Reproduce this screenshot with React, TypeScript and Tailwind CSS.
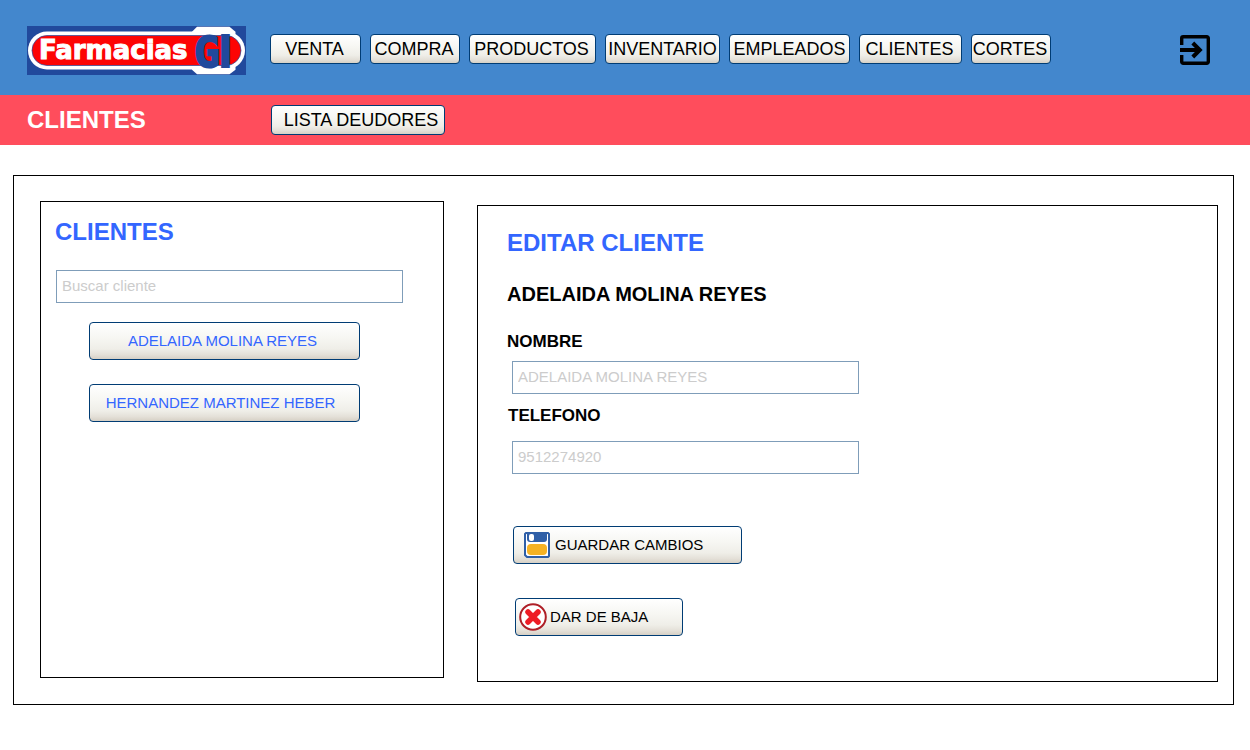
import type { InputHTMLAttributes, ReactNode } from "react";

const face =
  "rounded-[4px] border border-[#003c74] bg-[linear-gradient(180deg,#ffffff_0%,#f7f7f3_40%,#efeee8_72%,#e4e0d8_88%,#d6d0c5_100%)] whitespace-nowrap";

const navItems = [
  { label: "VENTA", size: "w-[91px] pr-[2px]" },
  { label: "COMPRA", size: "w-[90px] pr-[2px]" },
  { label: "PRODUCTOS", size: "w-[127px] pr-[2px]" },
  { label: "INVENTARIO", size: "w-[115px]" },
  { label: "EMPLEADOS", size: "w-[121px]" },
  { label: "CLIENTES", size: "w-[103px] pr-[2px]" },
  { label: "CORTES", size: "w-[80px] pr-[2px]" },
];

const clients = [
  { name: "ADELAIDA MOLINA REYES", inset: "pr-1" },
  { name: "HERNANDEZ MARTINEZ HEBER", inset: "pr-2" },
];

function Logo() {
  return (
    <svg width="219" height="49" viewBox="0 0 219 49" role="img" aria-label="Farmacias GI" className="shrink-0 overflow-visible">
      <rect width="219" height="49" fill="#21499c" />
      <rect x="1" y="5.5" width="217" height="38" rx="19" fill="#fff" />
      <path d="M170 .8h32.5l6 5v38l-6 4.500H170l-5-4.500v-38z" fill="#fff" />
      <rect x="5" y="9.500" width="209" height="30" rx="15" fill="#fd0404" stroke="#21499c" strokeWidth="0.7" />
      <text x="12" y="33" fontFamily="DejaVu Sans" fontWeight="700" fontSize="26" fill="#fff" stroke="#fff" strokeWidth="1">
        Farmacias
      </text>
      <text y="41" fontWeight="700" fill="#21499c" stroke="#21499c" strokeWidth="2">
        <tspan x="167" fontFamily="DejaVu Sans Mono" fontSize="43">G</tspan>
        <tspan x="192" fontFamily="Liberation Sans" fontSize="46">I</tspan>
      </text>
    </svg>
  );
}

function ExitIcon() {
  return (
    <svg width="30" height="30" viewBox="0 0 30 30" fill="none" stroke="#000" strokeWidth="3.4" aria-hidden="true">
      <path d="M1.7 10V3.2a1.5 1.5 0 0 1 1.5-1.5h23.6a1.5 1.5 0 0 1 1.5 1.5v23.6a1.5 1.5 0 0 1-1.5 1.5H3.2a1.5 1.5 0 0 1-1.5-1.5V20" />
      <path d="M0 15h20M12.8 8l7 7-7 7" strokeWidth="4" />
    </svg>
  );
}

function SaveIcon() {
  return (
    <svg width="26" height="26" viewBox="0 0 26 26" aria-hidden="true">
      <path d="M2 1h22l1 1v22l-1 1H3l-2-2V2z" fill="#fff" stroke="#2f5fa7" strokeWidth="2" />
      <path d="M3 0h20v7q0 3-3 3H6q-3 0-3-3z" fill="#2f5fa7" />
      <rect x="5" y="2" width="5" height="7" rx="2" fill="#fff" />
      <rect x="3" y="12" width="20" height="11" rx="4" fill="#f5b224" />
    </svg>
  );
}

function RemoveIcon() {
  return (
    <svg width="28" height="28" viewBox="0 0 28 28" fill="none" aria-hidden="true">
      <circle cx="14" cy="14" r="12.8" fill="#fff" stroke="#ae1f27" strokeWidth="2" />
      <path d="m9 9 10 10m0-10L9 19" stroke="#ee1c25" strokeWidth="5.5" strokeLinecap="round" />
    </svg>
  );
}

function TextBox(props: InputHTMLAttributes<HTMLInputElement>) {
  return (
    <input
      {...props}
      className="block h-[33px] w-full max-w-[347px] border border-[#7f9db9] bg-white px-[5px] pb-[3px] text-[15px] text-black placeholder:text-[#cccccc]"
    />
  );
}

function ActionButton({ icon, size, children }: { icon: ReactNode; size: string; children: ReactNode }) {
  return (
    <button type="button" className={`${face} ${size} flex h-[38px] items-center text-[15px]`}>
      {icon}
      {children}
    </button>
  );
}

export default function App() {
  return (
    <div className="font-['Liberation_Sans',Arial,sans-serif] text-black">
      <header>
        <div className="flex h-[95px] items-center bg-[#4387cd] pt-[6px] pr-10 pl-[27px]">
          <Logo />
          <nav className="ml-6 flex gap-[9px] pb-[3px]">
            {navItems.map((item) => (
              <button key={item.label} type="button" className={`${face} ${item.size} flex h-[30px] items-center justify-center text-lg`}>
                {item.label}
              </button>
            ))}
          </nav>
          <button type="button" aria-label="Salir" className="ml-auto pb-px">
            <ExitIcon />
          </button>
        </div>
        <div className="flex items-center bg-[#ff4d5c] pt-[10px] pb-[10px] pl-[27px]">
          <h1 className="w-[244px] text-2xl leading-[30px] font-bold text-white">CLIENTES</h1>
          <button type="button" className={`${face} h-[30px] w-[174px] pl-[6px] text-lg`}>
            LISTA DEUDORES
          </button>
        </div>
      </header>

      <main className="mt-[30px] mr-4 ml-[13px] grid grid-cols-[404px_1fr] gap-x-[33px] border border-black pt-[25px] pr-[15px] pb-[22px] pl-[26px]">
        <section className="mb-1 min-h-[477px] border border-black pt-[14px] pr-10 pl-[15px]">
          <h2 className="mb-[22px] -ml-px text-2xl font-bold text-[#3366ff]">CLIENTES</h2>
          <TextBox type="search" aria-label="Buscar cliente" placeholder="Buscar cliente" />
          <ul className="mt-[19px] ml-[33px] flex flex-col gap-6">
            {clients.map((client) => (
              <li key={client.name}>
                <button type="button" className={`${face} ${client.inset} block h-[38px] w-[271px] text-[15px] text-[#3366ff]`}>
                  {client.name}
                </button>
              </li>
            ))}
          </ul>
        </section>

        <section className="mt-1 min-h-[477px] border border-black pt-[21px] pl-[29px]">
          <h2 className="text-2xl font-bold text-[#3366ff]">EDITAR CLIENTE</h2>
          <h3 className="mt-[21px] text-xl leading-7 font-bold">ADELAIDA MOLINA REYES</h3>
          <form className="mt-6">
            <label htmlFor="nombre" className="block text-[17px] leading-5 font-bold">
              NOMBRE
            </label>
            <div className="mt-[9px] ml-[5px]">
              <TextBox id="nombre" type="text" placeholder="ADELAIDA MOLINA REYES" />
            </div>
            <label htmlFor="telefono" className="mt-3 block pl-px text-[17px] leading-5 font-bold">
              TELEFONO
            </label>
            <div className="mt-[15px] ml-[5px]">
              <TextBox id="telefono" type="tel" placeholder="9512274920" />
            </div>
            <div className="mt-[52px] ml-[6px] flex flex-col gap-[34px]">
              <ActionButton icon={<SaveIcon />} size="w-[229px] gap-[5px] pl-[10px]">
                GUARDAR CAMBIOS
              </ActionButton>
              <ActionButton icon={<RemoveIcon />} size="ml-[2px] w-[168px] gap-[3px] pl-[3px]">
                DAR DE BAJA
              </ActionButton>
            </div>
          </form>
        </section>
      </main>
    </div>
  );
}
